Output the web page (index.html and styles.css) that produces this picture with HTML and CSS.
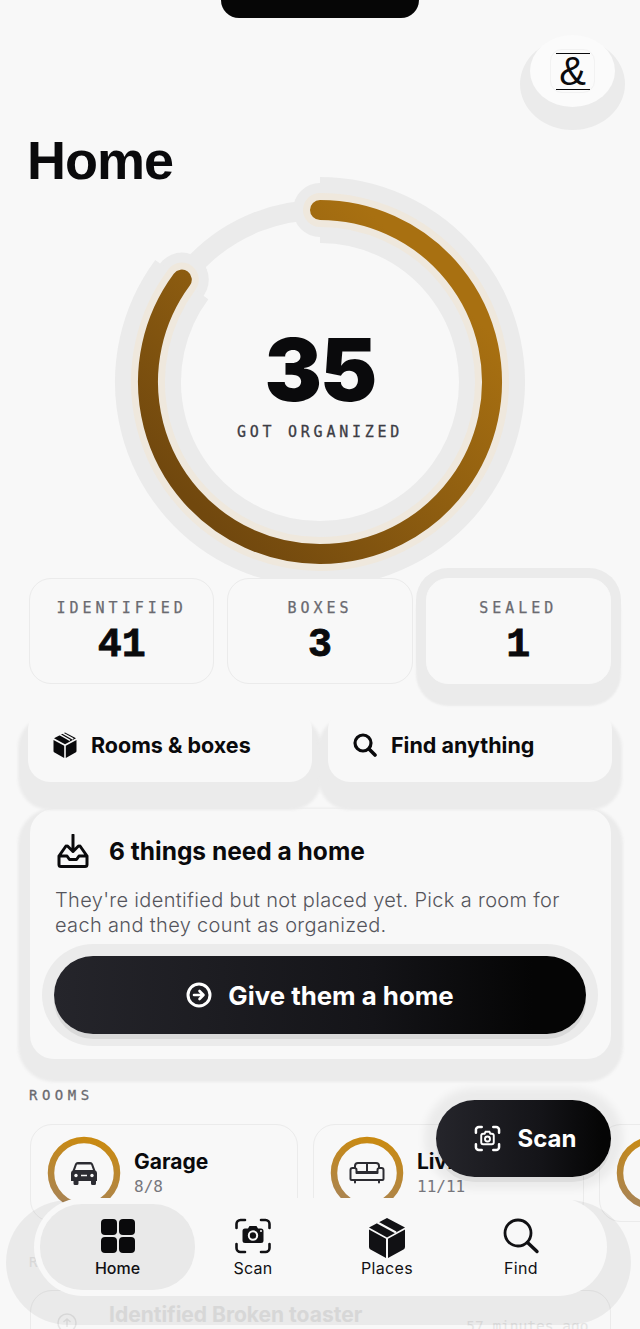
FILE: index.html
```html
<!DOCTYPE html>
<html lang="en">
<head>
  <meta charset="UTF-8">
  <meta name="viewport" content="width=device-width, initial-scale=1.0">
  <title>Home</title>
  <link rel="stylesheet" href="styles.css">
</head>
<body>
  <div class="screen">
    <div class="notch"></div>

    <div class="top-bar">
      <div class="avatar">
        <div class="logo"><span>&amp;</span></div>
      </div>
    </div>

    <h1 class="page-title">Home</h1>

    <div class="ring-wrap">
      <svg class="ring" width="420" height="420" viewBox="0 0 420 420">
        <defs>
          <linearGradient id="ringGrad" x1="0.9" y1="0.1" x2="0.1" y2="0.9">
            <stop offset="0.1" stop-color="#a87011"/>
            <stop offset="0.5" stop-color="#8f5e10"/>
            <stop offset="0.95" stop-color="#71480e"/>
          </linearGradient>
        </defs>
        <circle cx="210" cy="210" r="172" fill="none" stroke="#ebebeb" stroke-width="20"/>
        <circle cx="210" cy="38" r="27" fill="#ebebeb"/>
        <circle cx="71.8" cy="107.6" r="27" fill="#ebebeb"/>
        <path d="M 210 38 A 172 172 0 1 1 71.8 107.6" fill="none" stroke="#ebebeb" stroke-width="66"/>
        <path d="M 210 38 A 172 172 0 1 1 71.8 107.6" fill="none" stroke="#efe8dd" stroke-width="34" stroke-linecap="round"/>
        <path d="M 210 38 A 172 172 0 1 1 71.8 107.6" fill="none" stroke="url(#ringGrad)" stroke-width="20" stroke-linecap="round"/>
      </svg>
      <div class="ring-label">
        <div class="ring-count">35</div>
        <div class="ring-caption">GOT ORGANIZED</div>
      </div>
    </div>

    <div class="stats">
      <div class="stat">
        <div class="stat-label">IDENTIFIED</div>
        <div class="stat-value">41</div>
      </div>
      <div class="stat">
        <div class="stat-label">BOXES</div>
        <div class="stat-value">3</div>
      </div>
      <div class="stat stat-raised">
        <div class="stat-label">SEALED</div>
        <div class="stat-value">1</div>
      </div>
    </div>

    <div class="actions">
      <div class="action">
        <svg width="24" height="26" viewBox="0 0 24 26">
          <path d="M12 0.5l11 5.8-11 6-11-6z" fill="#0a0a0c"/>
          <path d="M6 2.2l11 6.2M9.200 0.800l11 6.200" stroke="#f8f8f8" stroke-width="1.5"/>
          <path d="M0.500 8l10.700 5.800V26L1.500 20.600a2 2 0 0 1-1-1.700zM23.500 8v10.900a2 2 0 0 1-1 1.700L12.800 26V13.800z" fill="#0a0a0c"/>
        </svg>
        <span>Rooms &amp; boxes</span>
      </div>
      <div class="action">
        <svg width="24" height="24" viewBox="0 0 24 24"><circle cx="10" cy="10" r="8" fill="none" stroke="#0a0a0c" stroke-width="3.2"/><path d="M16 16l6 6" stroke="#0a0a0c" stroke-width="3.6" stroke-linecap="round"/></svg>
        <span>Find anything</span>
      </div>
    </div>

    <div class="card">
      <div class="card-head">
        <svg width="32" height="34" viewBox="0 0 32 34">
          <path d="M2 22h8l2.500 3.500h7L22 22h8v8.500a2 2 0 0 1-2 2H4a2 2 0 0 1-2-2zM2 22l7-10M30 22l-7-10M16 1v16.500M10.500 12l5.500 5.500 5.500-5.500" fill="none" stroke="#0a0a0c" stroke-width="3" stroke-linecap="round" stroke-linejoin="round"/>
        </svg>
        <h2>6 things need a home</h2>
      </div>
      <p>They're identified but not placed yet. Pick a room for each and they count as organized.</p>
      <div class="primary">
        <svg width="26" height="26" viewBox="0 0 26 26"><circle cx="13" cy="13" r="11" fill="none" stroke="#fff" stroke-width="3"/><path d="M8 13h9M13.500 9l4 4-4 4" fill="none" stroke="#fff" stroke-width="2.6" stroke-linecap="round" stroke-linejoin="round"/></svg>
        <span>Give them a home</span>
      </div>
    </div>

    <div class="section-label">ROOMS</div>
    <div class="rooms">
      <div class="room">
        <svg class="room-ring" width="76" height="76" viewBox="0 0 76 76">
          <defs>
            <linearGradient id="roomGrad" x1="0.6" y1="0" x2="0.4" y2="1">
              <stop offset="0" stop-color="#c98a12"/>
              <stop offset="1" stop-color="#a98454"/>
            </linearGradient>
          </defs>
          <circle cx="38" cy="38" r="33" fill="none" stroke="url(#roomGrad)" stroke-width="6.5"/>
          <path d="M25 46v-8a3 3 0 0 1 1.600-2.600l2.400-6.400a3 3 0 0 1 2.800-1.900h12.400a3 3 0 0 1 2.800 1.900l2.400 6.400a3 3 0 0 1 1.600 2.600v8h-1v2.500a1.500 1.500 0 0 1-1.500 1.500h-2a1.500 1.500 0 0 1-1.500-1.500V46H32.500v2.500a1.500 1.500 0 0 1-1.500 1.500h-2a1.500 1.500 0 0 1-1.500-1.500V46z" fill="#2c2c32"/>
          <path d="M29 35l2-5.500h14l2 5.500z" fill="#f8f8f8"/>
          <circle cx="30" cy="40.500" r="1.700" fill="#f8f8f8"/><circle cx="46" cy="40.500" r="1.700" fill="#f8f8f8"/><path d="M35 40.500h6" stroke="#f8f8f8" stroke-width="1.5"/>
        </svg>
        <div class="room-text">
          <div class="room-name">Garage</div>
          <div class="room-count">8/8</div>
        </div>
      </div>
      <div class="room room-living">
        <svg class="room-ring" width="76" height="76" viewBox="0 0 76 76">
          <circle cx="38" cy="38" r="33" fill="none" stroke="url(#roomGrad)" stroke-width="6.5"/>
          <path d="M26 33v-2a3 3 0 0 1 3-3h18a3 3 0 0 1 3 3v2M38 28v9M27.500 37h21M23.500 33h2a2 2 0 0 1 2 2v3h21v-3a2 2 0 0 1 2-2h2a2 2 0 0 1 2 2v9a1 1 0 0 1-1 1H22.500a1 1 0 0 1-1-1v-9a2 2 0 0 1 2-2zM26 45v2.500M50 45v2.500" fill="none" stroke="#2c2c32" stroke-width="2" stroke-linecap="round" stroke-linejoin="round"/>
        </svg>
        <div class="room-text">
          <div class="room-name">Living room</div>
          <div class="room-count">11/11</div>
        </div>
      </div>
      <div class="room">
        <svg class="room-ring" width="76" height="76" viewBox="0 0 76 76">
          <circle cx="38" cy="38" r="33" fill="none" stroke="url(#roomGrad)" stroke-width="6.5"/>
        </svg>
      </div>
    </div>

    <div class="section-label section-faded">RECENT</div>
    <div class="activity">
      <svg width="20" height="20" viewBox="0 0 20 20"><circle cx="10" cy="10" r="9" fill="none" stroke="#e4e4e4" stroke-width="1.5"/><path d="M10 14V6M6.500 9L10 6l3.500 3" fill="none" stroke="#e4e4e4" stroke-width="1.5"/></svg>
      <span class="activity-name">Identified Broken toaster</span>
      <span class="activity-time">57 minutes ago</span>
    </div>

    <div class="fab">
      <svg width="27" height="27" viewBox="0 0 28 28"><path d="M2 8V5a3 3 0 0 1 3-3h3M20 2h3a3 3 0 0 1 3 3v3M26 20v3a3 3 0 0 1-3 3h-3M8 26H5a3 3 0 0 1-3-3v-3" fill="none" stroke="#fff" stroke-width="2.6" stroke-linecap="round"/><path d="M9.500 9h1.500l1-2h4l1 2h1.500a2 2 0 0 1 2 2v7a2 2 0 0 1-2 2h-9a2 2 0 0 1-2-2v-7a2 2 0 0 1 2-2z" fill="none" stroke="#fff" stroke-width="2"/><circle cx="14" cy="14.500" r="2.600" fill="none" stroke="#fff" stroke-width="2"/></svg>
      <span>Scan</span>
    </div>

    <nav class="tabs">
      <div class="tab tab-active">
        <svg width="36" height="36" viewBox="0 0 36 36"><rect x="1" y="1" width="16" height="16" rx="4" fill="#0a0a0c"/><rect x="19" y="1" width="16" height="16" rx="4" fill="#0a0a0c"/><rect x="1" y="19" width="16" height="16" rx="4" fill="#0a0a0c"/><rect x="19" y="19" width="16" height="16" rx="4" fill="#0a0a0c"/></svg>
        <span>Home</span>
      </div>
      <div class="tab">
        <svg width="36" height="36" viewBox="0 0 36 36"><path d="M1.500 10V6a4 4 0 0 1 4-4h4.500M26 2h4.500a4 4 0 0 1 4 4v4M34.500 26v4a4 4 0 0 1-4 4H26M10 34H5.500a4 4 0 0 1-4-4v-4" fill="none" stroke="#111114" stroke-width="2.6" stroke-linecap="round"/><path d="M10 10.500h3l1.500-2.500h7l1.500 2.500h3a2.500 2.500 0 0 1 2.500 2.500v9.500a2.500 2.500 0 0 1-2.500 2.500H10a2.500 2.500 0 0 1-2.500-2.500V13a2.500 2.500 0 0 1 2.500-2.500z" fill="#111114"/><circle cx="18" cy="17.500" r="4.200" fill="none" stroke="#f8f8f8" stroke-width="2"/><circle cx="26" cy="13" r="1" fill="#f8f8f8"/></svg>
        <span>Scan</span>
      </div>
      <div class="tab">
        <svg width="38" height="36" viewBox="0 -2 38 36">
          <path d="M19 -2l18 9.500-18 10-18-10z" fill="#111114"/>
          <path d="M9.500 2.500l18.500 10" stroke="#f8f8f8" stroke-width="2"/>
          <path d="M1 9.500l17 9.300V38L2.500 29.500A3 3 0 0 1 1 27zM37 9.500V27a3 3 0 0 1-1.500 2.500L20 38V18.800z" fill="#111114"/>
        </svg>
        <span>Places</span>
      </div>
      <div class="tab">
        <svg width="36" height="36" viewBox="0 0 36 36"><circle cx="15" cy="15" r="13" fill="none" stroke="#111114" stroke-width="2.8"/><path d="M24.500 24.500l9.500 9" stroke="#111114" stroke-width="3.4" stroke-linecap="round"/></svg>
        <span>Find</span>
      </div>
    </nav>
  </div>
</body>
</html>
```

FILE: styles.css
```css
/* Basic styling */
* {
  box-sizing: border-box;
}
html, body {
  margin: 0;
  background-color: #f8f8f8;
}
body {
  font-family: Inter, "Liberation Sans", sans-serif;
  color: #0a0a0c;
}
.screen {
  position: relative;
  width: 640px;
  height: 1329px;
  overflow: hidden;
  padding-top: 35px;
}

/* Status area */
.notch {
  position: absolute;
  top: 0;
  left: 221px;
  width: 198px;
  height: 18px;
  background-color: #060606;
  border-radius: 0 0 20px 20px;
}
.top-bar {
  display: flex;
  justify-content: flex-end;
  padding-right: 25px;
}
.avatar {
  display: flex;
  align-items: center;
  justify-content: center;
  width: 85px;
  height: 72px;
  background-color: #fbfbfb;
  border-radius: 50%;
  box-shadow: 0 13px 0 10px #ebebeb;
}
.logo {
  display: flex;
  align-items: center;
  justify-content: center;
  width: 45px;
  height: 44px;
  background-color: #fbfbfb;
  border: 1px solid #f2f2f2;
  border-radius: 12px;
  font-family: "Liberation Sans", sans-serif;
  font-size: 40px;
  line-height: 35px;
}
.logo span {
  width: 34px;
  text-align: center;
  border-top: 1.5px solid #0a0a0c;
  border-bottom: 1.5px solid #0a0a0c;
}
.page-title {
  margin: 23px 0 0 27px;
  font-family: "Liberation Sans", sans-serif;
  font-size: 54px;
  font-weight: 700;
  line-height: 60px;
  letter-spacing: -1px;
}

/* Progress ring */
.ring-wrap {
  display: grid;
  place-items: center;
  width: 420px;
  height: 420px;
  margin: -18px auto 0;
}
.ring, .ring-label {
  grid-area: 1 / 1;
}
.ring-label {
  padding-top: 4px;
  text-align: center;
}
.ring-count {
  font-size: 86px;
  font-weight: 900;
  line-height: 86px;
  letter-spacing: -2px;
}
.ring-caption {
  margin-top: 10px;
  font-family: "DejaVu Sans Mono", monospace;
  font-size: 15px;
  letter-spacing: 3.75px;
  color: #3d3d45;
  -webkit-text-stroke: 0.3px #3d3d45;
}

/* Stat row */
.stats {
  display: flex;
  gap: 13px;
  margin: -14px 29px 0;
}
.stat {
  flex: 1;
  height: 106px;
  padding-top: 20px;
  text-align: center;
  background-color: #f8f8f8;
  border: 1px solid #ebebeb;
  border-radius: 22px;
}
.stat-raised {
  border-color: #f8f8f8;
  box-shadow: 0 0 0 10px #ebebeb, 0 12px 2px 10px #ebebeb;
}
.stat-label {
  font-family: "DejaVu Sans Mono", monospace;
  font-size: 15px;
  letter-spacing: 4px;
  color: #6a6a70;
  -webkit-text-stroke: 0.25px #6a6a70;
}
.stat-value {
  margin-top: 8px;
  font-family: "Liberation Mono", monospace;
  font-size: 40px;
  font-weight: 700;
  line-height: 42px;
  -webkit-text-stroke: 0.8px #0a0a0c;
}

/* Big buttons */
.actions {
  display: flex;
  gap: 16px;
  margin: 24px 28px 0;
}
.action {
  flex: 1;
  display: flex;
  align-items: center;
  gap: 14px;
  height: 74px;
  padding-left: 25px;
  background-color: #f8f8f8;
  border-radius: 22px;
  box-shadow: 0 18px 3px 10px #ebebeb;
  font-size: 21.5px;
  font-weight: 700;
}
.card {
  width: 581px;
  height: 250px;
  margin: 27px 0 0 30px;
  padding: 25px 25px 0;
  background-color: #f8f8f8;
  border-radius: 24px;
  box-shadow: 0 11px 3px 12px #ebebeb;
}
.card-head {
  display: flex;
  align-items: center;
  gap: 20px;
  padding-left: 2px;
}
.card-head h2 {
  margin: 0;
  font-size: 24.5px;
  font-weight: 700;
  line-height: 34px;
}
.card p {
  margin: 20px 0 0;
  font-size: 20px;
  font-weight: 300;
  line-height: 24.5px;
  letter-spacing: 0.33px;
  color: #55555c;
}
.primary {
  display: flex;
  align-items: center;
  justify-content: center;
  gap: 16px;
  width: 532px;
  height: 78px;
  margin: 19px 0 0 -1px;
  border-radius: 39px;
  background: linear-gradient(90deg, #25252b 0%, #141418 60%, #050505 90%);
  box-shadow: 0 5px 0 #d9d9d9, 0 0 0 12px #ebebeb;
  font-size: 25.8px;
  font-weight: 700;
  color: #fff;
}

/* Lower sections */
.section-label {
  margin: 28px 0 0 29px;
  font-family: "DejaVu Sans Mono", monospace;
  font-size: 14px;
  line-height: 16px;
  letter-spacing: 4.5px;
  color: #6a6a70;
  -webkit-text-stroke: 0.3px #6a6a70;
}
.rooms {
  display: flex;
  gap: 15px;
  width: 900px;
  margin: 21px 0 0 30px;
}
.room {
  flex: none;
  display: flex;
  align-items: center;
  gap: 12px;
  width: 268px;
  height: 98px;
  padding: 0 15px;
  border: 1px solid #ebebeb;
  border-radius: 22px;
}
.room-living {
  width: 271px;
}
.room-text {
  padding-top: 2px;
}
.room-name {
  font-size: 21px;
  font-weight: 700;
  line-height: 26px;
}
.room-count {
  font-family: "DejaVu Sans Mono", monospace;
  font-size: 16px;
  line-height: 24px;
  color: #77777d;
}
.section-faded {
  margin-top: 32px;
  color: #e4e4e4;
  -webkit-text-stroke: 0;
}
.activity {
  display: flex;
  align-items: flex-start;
  gap: 32px;
  width: 581px;
  height: 70px;
  margin: 20px 0 0 30px;
  padding: 12px 0 0 26px;
  border: 1px solid #ebebeb;
  border-radius: 22px;
  color: #e4e4e4;
  white-space: nowrap;
}
.activity svg {
  flex: none;
  margin-top: 10px;
}
.activity-name {
  font-size: 21px;
  font-weight: 700;
  line-height: 24px;
}
.activity-time {
  margin: 15px 0 0 72px;
  font-family: "DejaVu Sans Mono", monospace;
  font-size: 14.5px;
}

/* Floating bits */
.fab {
  position: absolute;
  left: 436px;
  top: 1100px;
  z-index: 2;
  display: flex;
  align-items: center;
  justify-content: center;
  gap: 17px;
  width: 175px;
  height: 77px;
  padding-left: 3px;
  border-radius: 39px;
  background: linear-gradient(90deg, #25252b 0%, #141418 60%, #050505 95%);
  box-shadow: 0 5px 0 rgba(0, 0, 0, 0.06), 0 0 8px 12px rgba(0, 0, 0, 0.055);
  font-size: 24px;
  font-weight: 700;
  color: #fff;
}
.tabs {
  position: absolute;
  left: 34px;
  top: 1198px;
  z-index: 1;
  display: flex;
  width: 573px;
  height: 98px;
  padding: 6px;
  border-radius: 49px;
}
.tabs::before {
  content: "";
  position: absolute;
  inset: 2px -24px -29px -28px;
  z-index: -1;
  background-color: rgba(0, 0, 0, 0.055);
  border-radius: 70px;
}
.tabs::after {
  content: "";
  position: absolute;
  inset: 0;
  z-index: -1;
  background-color: #f8f8f8;
  border-radius: 49px;
}
.tab {
  flex: none;
  width: 134px;
  display: flex;
  flex-direction: column;
  align-items: center;
  gap: 4px;
  padding-top: 14px;
  border-radius: 42px;
  font-size: 16px;
  letter-spacing: 0.3px;
  color: #111114;
}
.tab-active {
  width: 155px;
  margin-right: -9px;
  background-color: #e9e9e9;
  font-weight: 500;
  letter-spacing: 0;
}
.tab svg {
  overflow: visible;
}
```
